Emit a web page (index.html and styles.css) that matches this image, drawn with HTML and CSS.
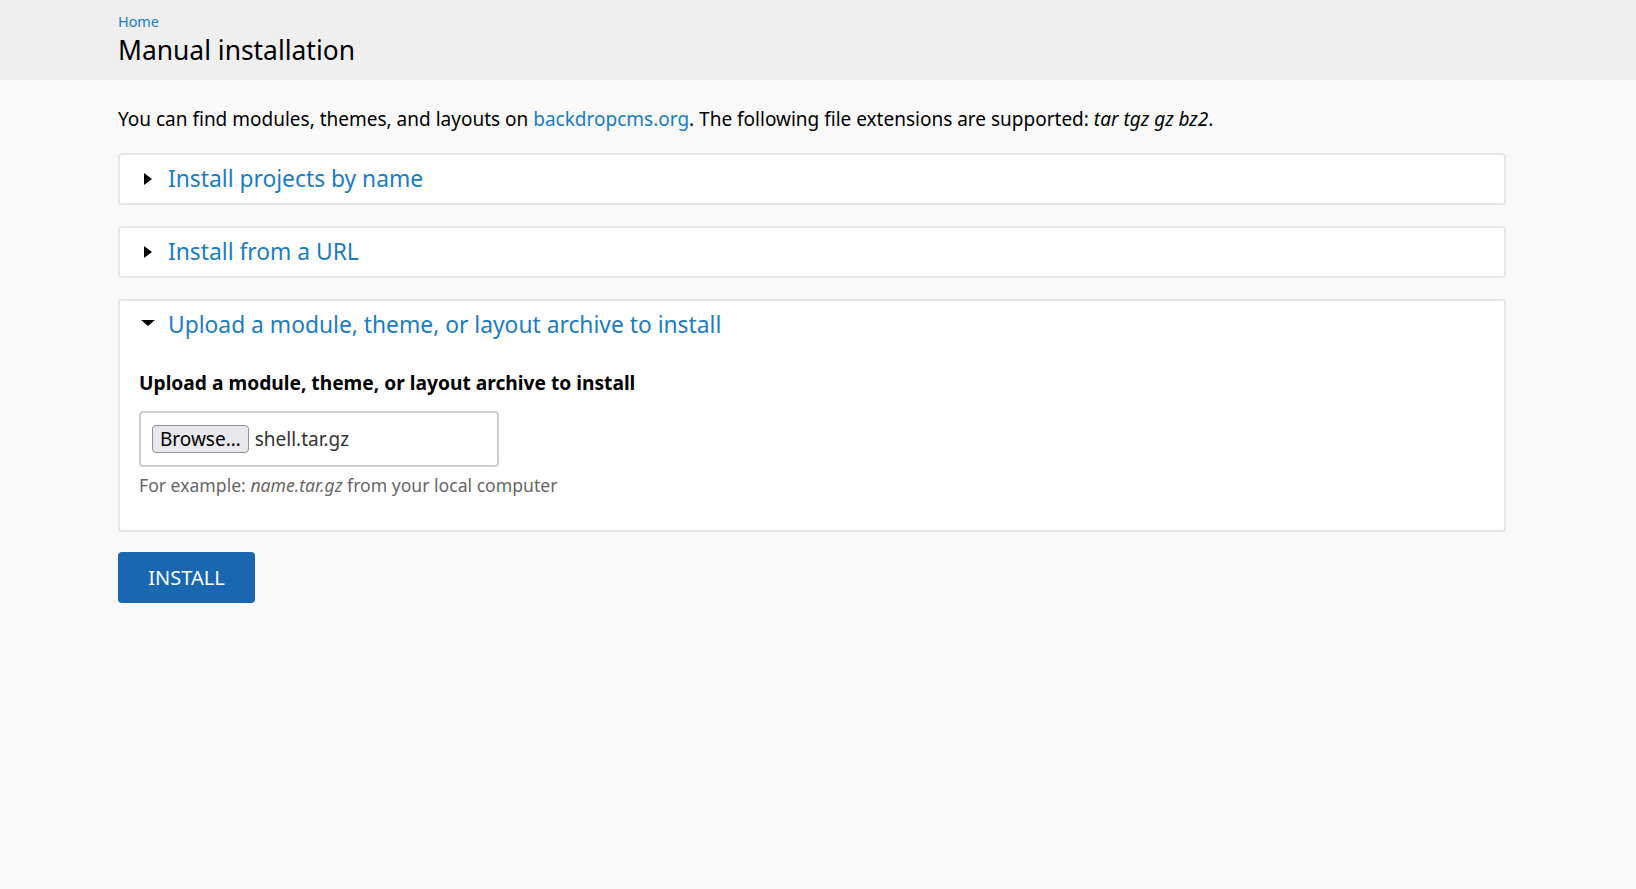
FILE: index.html
```html
<!DOCTYPE html>
<html lang="en">
<head>
<meta charset="utf-8">
<title>Manual installation</title>
<link rel="stylesheet" href="styles.css">
</head>
<body>
<header class="page-header">
  <nav class="breadcrumb"><a href="#">Home</a></nav>
  <h1 class="page-title">Manual installation</h1>
</header>
<main class="content">
  <p class="intro">You can find modules, themes, and layouts on <a href="#">backdropcms.org</a>. The following file extensions are supported: <em>tar tgz gz bz2</em>.</p>
  <details class="panel">
    <summary class="panel-summary"><span class="marker"><span class="tri-right"></span></span><span class="panel-title">Install projects by name</span></summary>
  </details>
  <details class="panel">
    <summary class="panel-summary"><span class="marker"><span class="tri-right"></span></span><span class="panel-title">Install from a URL</span></summary>
  </details>
  <details class="panel" open>
    <summary class="panel-summary"><span class="marker"><span class="tri-down"></span></span><span class="panel-title">Upload a module, theme, or layout archive to install</span></summary>
    <div class="panel-body">
      <label class="field-label">Upload a module, theme, or layout archive to install</label>
      <div class="file-box">
        <span class="browse-btn">Browse…</span>
        <span class="file-name">shell.tar.gz</span>
      </div>
      <div class="description">For example: <em>name.tar.gz</em> from your local computer</div>
    </div>
  </details>
  <button class="install-btn" type="button">Install</button>
</main>
</body>
</html>
```
FILE: styles.css
```css
html, body {
  margin: 0;
  padding: 0;
}
body {
  background: #f9f9f9;
  font-family: "Noto Sans", "Open Sans", sans-serif;
  color: #000;
}
a {
  color: #1a7cc3;
  text-decoration: none;
}
.page-header {
  background: #efefef;
  height: 80px;
  box-sizing: border-box;
  padding: 12px 0 0 118px;
}
.breadcrumb {
  font-size: 14.4px;
  line-height: 19px;
}
.page-title {
  margin: 0;
  font-size: 26.4px;
  font-weight: 400;
  line-height: 38px;
}
.content {
  width: 1388px;
  margin-left: 118px;
  padding-top: 25px;
}
.intro {
  margin: 0 0 20px;
  font-size: 19px;
  line-height: 28px;
}
.panel {
  background: #fff;
  border: 2px solid #e6e6e6;
  border-radius: 4px;
  margin-bottom: 21px;
}
.panel-summary {
  list-style: none;
  display: flex;
  align-items: center;
  padding: 8px 0 8px 21px;
  cursor: pointer;
}
.panel-summary::-webkit-details-marker {
  display: none;
}
.marker {
  width: 14px;
  display: flex;
  justify-content: center;
  margin-right: 13px;
}
.tri-right {
  width: 0;
  height: 0;
  border-left: 8px solid #000;
  border-top: 6.5px solid transparent;
  border-bottom: 6.5px solid transparent;
  margin-top: -1px;
}
.tri-down {
  width: 0;
  height: 0;
  border-top: 6px solid #000;
  border-left: 7px solid transparent;
  border-right: 7px solid transparent;
  margin-top: -4px;
}
.panel-title {
  color: #1a7cc3;
  font-size: 22.8px;
  line-height: 32px;
}
.panel-body {
  padding: 20px 19px 33px;
}
.field-label {
  display: block;
  font-size: 19.2px;
  font-weight: 700;
  line-height: 27px;
  margin-bottom: 15px;
}
.file-box {
  width: 360px;
  height: 56px;
  box-sizing: border-box;
  border: 2px solid #cfcfcf;
  border-radius: 4px;
  display: flex;
  align-items: center;
  padding: 0 11px;
  gap: 6px;
  font-size: 19px;
}
.browse-btn {
  height: 28px;
  box-sizing: border-box;
  border: 1px solid #8f8f9d;
  border-radius: 4px;
  background: #e9e9ed;
  color: #000;
  padding: 0 7px;
  line-height: 26px;
  font-size: 19px;
}
.file-name {
  color: #333;
}
.description {
  margin-top: 6px;
  font-size: 17.6px;
  line-height: 24px;
  color: #666;
}
.install-btn {
  display: block;
  margin-top: -1px;
  height: 51px;
  width: 137px;
  border: 0;
  border-radius: 4px;
  background: #1967b0;
  color: #fff;
  font-family: "Noto Sans", "Open Sans", sans-serif;
  font-size: 20px;
  text-transform: uppercase;
  padding: 0;
  cursor: pointer;
}
```
